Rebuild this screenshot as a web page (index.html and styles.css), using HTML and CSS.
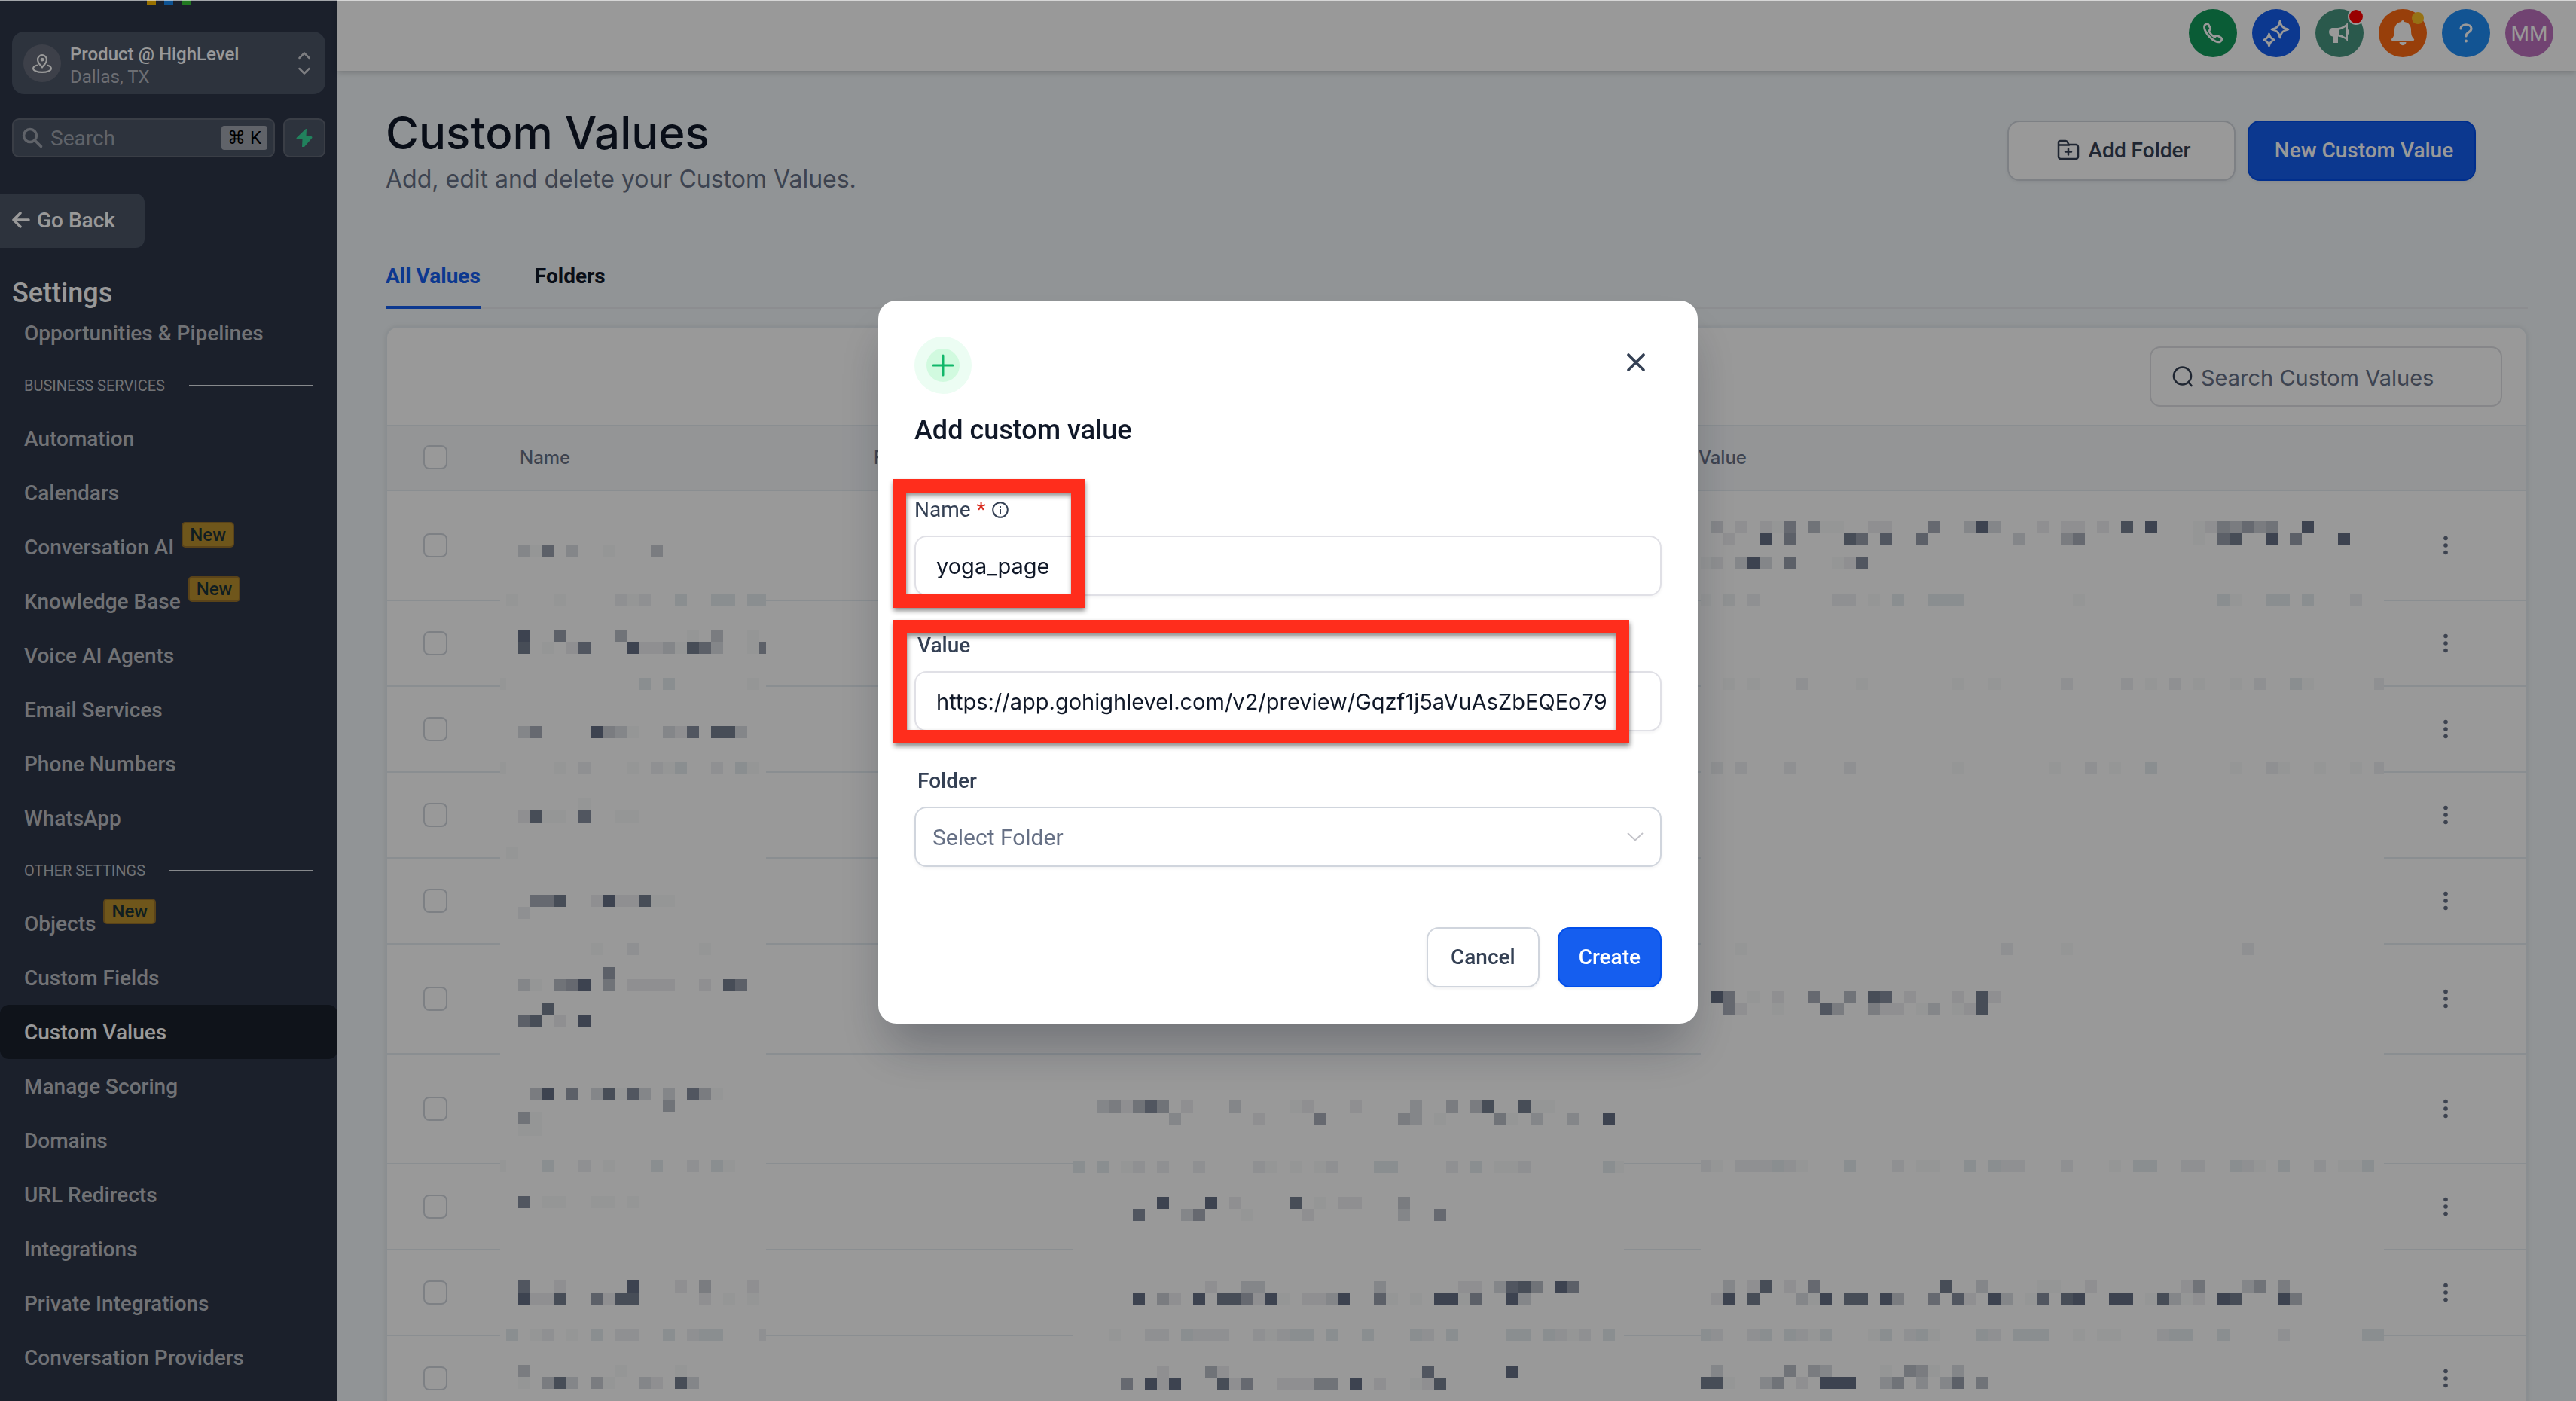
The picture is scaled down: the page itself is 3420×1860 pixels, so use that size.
FILE: index.html
```html
<!DOCTYPE html>
<html lang="en">
<head>
  <meta charset="UTF-8">
  <title>Custom Values</title>
  <link rel="stylesheet" href="styles.css">
</head>
<body>

  <aside class="sidebar">
    <div class="logo"><i class="logo-y"></i><i class="logo-b"></i><i class="logo-g"></i></div>

    <button class="location">
      <span class="location-icon">
        <svg width="26" height="26" viewBox="0 0 24 24" fill="none" stroke="currentColor" stroke-width="2" stroke-linecap="round" stroke-linejoin="round"><path d="M12 17c-1-2-5.5-5-5.5-9.500a5.500 5.500 0 0 1 11 0C17.500 12 13 15 12 17z"/><circle cx="12" cy="7.500" r="1.200"/><path d="M5.500 14.500C3 15 1 16.500 1 18.500 1 21 6 23 12 23s11-2 11-4.500c0-2-2-3.500-4.500-4"/></svg>
      </span>
      <span class="location-text"><b>Product @ HighLevel</b><span>Dallas, TX</span></span>
      <svg class="location-arrows" width="16" height="30" viewBox="0 0 16 30" fill="none" stroke="currentColor" stroke-width="2.500" stroke-linecap="round" stroke-linejoin="round"><path d="M1.500 8 8 1.500 14.500 8M1.500 22 8 28.500 14.500 22"/></svg>
    </button>

    <div class="side-search">
      <label class="side-search-box">
        <svg width="28" height="28" viewBox="0 0 28 28" fill="none" stroke="currentColor" stroke-width="3.500" stroke-linecap="round"><circle cx="11" cy="11" r="8.500"/><path d="m17.500 17.500 8 8"/></svg>
        <input type="text" placeholder="Search" aria-label="Search">
        <kbd>⌘ K</kbd>
      </label>
      <button class="bolt" aria-label="Quick actions">
        <svg width="22" height="24" viewBox="0 0 22 24" fill="currentColor"><path d="M13 0 1 11.500c-1 1-.5 2.500 1 2.500h6.500L8 24h3L21 12.500c1-1 .5-2.500-1-2.500h-6.500L14 0z"/></svg>
      </button>
    </div>

    <button class="go-back">
      <svg width="24" height="22" viewBox="0 0 24 22" fill="none" stroke="currentColor" stroke-width="3.500" stroke-linecap="round" stroke-linejoin="round"><path d="M22 11H2M11 2l-9 9 9 9"/></svg>
      Go Back
    </button>

    <h2 class="side-title">Settings</h2>

    <nav class="side-nav">
      <a href="#">Opportunities &amp; Pipelines</a>
      <div class="side-group">BUSINESS SERVICES</div>
      <a href="#">Automation</a>
      <a href="#">Calendars</a>
      <a href="#">Conversation AI <span class="new">New</span></a>
      <a href="#">Knowledge Base <span class="new">New</span></a>
      <a href="#">Voice AI Agents</a>
      <a href="#">Email Services</a>
      <a href="#">Phone Numbers</a>
      <a href="#">WhatsApp</a>
      <div class="side-group">OTHER SETTINGS</div>
      <a href="#">Objects <span class="new">New</span></a>
      <a href="#">Custom Fields</a>
      <a href="#" class="active">Custom Values</a>
      <a href="#">Manage Scoring</a>
      <a href="#">Domains</a>
      <a href="#">URL Redirects</a>
      <a href="#">Integrations</a>
      <a href="#">Private Integrations</a>
      <a href="#">Conversation Providers</a>
    </nav>
  </aside>

  <div class="page">
    <header class="topbar">
      <button class="round green" aria-label="Phone">
        <svg width="28" height="28" viewBox="0 0 28 28" fill="none" stroke="currentColor" stroke-width="2.800" stroke-linejoin="round"><path d="M3 3.500C4.500 1.500 7 1 8 2.500l2.500 4.700c.6 1.300-.2 2.500-1.800 3.800 1.500 3.500 4.300 6.500 7.800 8.300 1.400-1.500 2.700-2.400 4-1.700l4.500 2.700c1.500 1 .8 3.500-1.200 5C17 29.500-.5 11.500 3 3.500z"/></svg>
      </button>
      <button class="round blue" aria-label="AI">
        <svg width="38" height="38" viewBox="0 0 38 38" fill="none" stroke="currentColor" stroke-width="2.800" stroke-linejoin="round"><path d="M24 3c1.500 7 3.500 9 11 11-7.500 2-9.500 4-11 11-1.500-7-3.500-9-11-11 7.500-2 9.500-4 11-11zM9.500 20c1 4.500 2.500 6.500 7 8-4.500 1.500-6 3.500-7 8-1-4.500-2.500-6.500-7-8 4.500-1.500 6-3.500 7-8z"/></svg>
      </button>
      <button class="round teal" aria-label="Announcements">
        <svg width="28" height="28" viewBox="0 0 28 28"><path fill="currentColor" d="M25 0v9c2.500.5 2.500 6.500 0 7v9c-4-4-8-6-13-6.500V27H5v-8.500C-1.500 18-1.500 7 5 7h7c5-.5 9-3 13-7zm-3 6c-3 2-6 3.300-9 3.800v6c3 .5 6 1.800 9 3.700z"/></svg>
        <i class="dot red"></i>
      </button>
      <button class="round orange" aria-label="Notifications">
        <svg width="32" height="36" viewBox="0 0 32 36" fill="currentColor"><path d="M14 3a2 2 0 0 1 4 0c6 1 9 5 9 11 0 6 1 9 4 12 .5.500 0 2-1 2H2c-1 0-1.500-1.500-1-2 3-3 4-6 4-12 0-6 3-10 9-11zM11.500 30h9c0 5.500-9 5.500-9 0z"/></svg>
        <i class="dot yellow"></i>
      </button>
      <button class="round sky" aria-label="Help">
        <svg width="18" height="26" viewBox="0 0 18 26" fill="none" stroke="currentColor" stroke-width="3.200" stroke-linecap="round"><path d="M2 7c0-7 14-7 14 0 0 5-7 4.500-7 10"/><path d="M9 23.500v.1" stroke-width="4"/></svg>
      </button>
      <button class="round purple">MM</button>
    </header>

    <main class="content">
      <div class="head">
        <div>
          <h1>Custom Values</h1>
          <p>Add, edit and delete your Custom Values.</p>
        </div>
        <div class="head-actions">
          <button class="btn">
            <svg width="30" height="28" viewBox="0 0 30 28" fill="none" stroke="currentColor" stroke-width="2.500" stroke-linecap="round" stroke-linejoin="round"><path d="M2 8V4.500A2.500 2.500 0 0 1 4.500 2h7c1.500 0 2 .8 2.600 2l1.500 3H25a3 3 0 0 1 3 3v13a3 3 0 0 1-3 3H5a3 3 0 0 1-3-3zM2 7.500h14M15 12.500v8M11 16.500h8"/></svg>
            Add Folder
          </button>
          <button class="btn primary">New Custom Value</button>
        </div>
      </div>

      <nav class="tabs">
        <a href="#" class="on">All Values</a>
        <a href="#">Folders</a>
      </nav>

      <section class="card">
        <div class="card-bar">
          <label class="search">
            <svg width="28" height="28" viewBox="0 0 28 28" fill="none" stroke="currentColor" stroke-width="2.600" stroke-linecap="round"><circle cx="13.500" cy="13" r="11.500"/><path d="m21.500 21.500 4 4.500"/></svg>
            <input type="text" placeholder="Search Custom Values" aria-label="Search Custom Values">
          </label>
        </div>
        <table>
          <colgroup><col class="c-check"><col class="c-name"><col class="c-folder"><col class="c-key"><col><col class="c-more"></colgroup>
          <thead>
            <tr>
              <th><input type="checkbox" aria-label="Select all"></th>
              <th>Name</th><th>Folder</th><th>Key</th><th>Value</th><th></th>
            </tr>
          </thead>
          <tbody id="rows"></tbody>
        </table>
      </section>
    </main>
  </div>

  <div class="overlay">
    <form class="modal">
      <div class="modal-top">
        <span class="plus"><svg width="30" height="30" viewBox="0 0 30 30" fill="none" stroke="currentColor" stroke-width="3" stroke-linecap="round"><path d="M15 2v26M2 15h26"/></svg></span>
        <button type="button" class="close" aria-label="Close"><svg width="24" height="24" viewBox="0 0 24 24" fill="none" stroke="currentColor" stroke-width="3.600" stroke-linecap="round"><path d="m2 2 20 20M22 2 2 22"/></svg></button>
      </div>
      <h2>Add custom value</h2>

      <div class="field">
        <label for="name">Name <em>*</em>
          <svg width="22" height="22" viewBox="0 0 22 22" fill="none" stroke="currentColor" stroke-width="2"><circle cx="11" cy="11" r="9.800"/><path d="M11 10v6M11 6v2"/></svg>
        </label>
        <input type="text" id="name" value="yoga_page">
        <i class="mark mark-name"></i>
      </div>

      <div class="field medium">
        <label for="value">Value</label>
        <input type="text" id="value" value="https://app.gohighlevel.com/v2/preview/Gqzf1j5aVuAsZbEQEo79">
        <i class="mark mark-value"></i>
      </div>

      <div class="field medium">
        <label for="folder">Folder</label>
        <div class="select">
          <select id="folder"><option>Select Folder</option></select>
          <svg width="22" height="12" viewBox="0 0 22 12" fill="none" stroke="currentColor" stroke-width="1.800"><path d="m1 1 10 9.500L21 1"/></svg>
        </div>
      </div>

      <div class="modal-actions">
        <button type="button" class="btn">Cancel</button>
        <button type="button" class="btn primary">Create</button>
      </div>
    </form>
  </div>

  <script src="script.js"></script>
</body>
</html>
```
FILE: styles.css
```css
* { box-sizing: border-box; }
body { margin: 0; height: 100vh; display: flex; overflow: hidden; font-family: Roboto, "Liberation Sans", sans-serif; font-size: 28px; color: #101828; background: #f2f7fa; }
button, input, select { font: inherit; color: inherit; }
button { cursor: pointer; border: 0; background: none; padding: 0; }
a { color: inherit; text-decoration: none; }
svg { display: block; flex: none; }
h1, h2, p { margin: 0; font-weight: 500; }

/* sidebar */
.sidebar { width: 448px; flex: none; background: #2d3649; color: #fff; display: flex; flex-direction: column; align-items: flex-start; }
.logo { display: flex; gap: 11px; height: 42px; padding-left: 195px; }
.logo i { width: 12px; height: 6px; }
.logo-y { background: #ffbc00; }
.logo-b { background: #188bf6; }
.logo-g { background: #37ca37; }

.location { display: flex; align-items: center; gap: 12px; width: 416px; height: 83px; margin: 0 16px; padding: 0 20px 0 15px; border-radius: 16px; background: #4b5567; text-align: left; }
.location-icon { width: 50px; height: 50px; border-radius: 50%; background: #676c7a; display: grid; place-items: center; }
.location-text { flex: 1; padding-top: 6px; font-size: 24px; line-height: 30px; }
.location-text b { display: block; font-weight: 500; }
.location-text span { color: #b4b8c0; }
.location-arrows { color: #d0d3d8; }

.side-search { display: flex; gap: 11px; margin: 32px 16px 0; width: 416px; }
.side-search-box { flex: 1; min-width: 0; display: flex; align-items: center; gap: 10px; height: 52px; padding: 0 8px 0 11px; border: 2px solid #616876; border-radius: 9px; background: #4b5567; color: #a0a6b0; }
.side-search-box input { flex: 1; width: 0; min-width: 0; border: 0; padding: 0; background: none; outline: none; }
.side-search-box input::placeholder { color: #a0a6b0; opacity: 1; }
kbd { flex: none; font: inherit; font-size: 24px; line-height: 32px; padding: 0 8px; border-radius: 4px; background: #a0a6b0; color: #000; white-space: nowrap; }
.bolt { flex: none; width: 56px; height: 52px; display: grid; place-items: center; border: 2px solid #616876; border-radius: 9px; background: #4b5567; color: #38d79a; }

.go-back { display: flex; align-items: center; gap: 9px; width: 192px; height: 72px; margin-top: 48px; padding: 0 0 2px 16px; border-radius: 0 12px 12px 0; background: #4b5567; font-weight: 500; }
.side-title { margin: 38px 16px 0; font-size: 36px; line-height: 44px; }

.side-nav { width: 100%; margin-top: -5px; font-weight: 500; color: #bcbfc4; }
.side-nav a { display: flex; align-items: center; gap: 10px; height: 72px; padding-left: 32px; border-radius: 12px; white-space: nowrap; }
.side-nav .active { background: #1a202c; color: #fff; }
.side-group { display: flex; align-items: center; gap: 32px; height: 68px; padding: 0 32px; font-size: 20px; font-weight: 400; }
.side-group::after { content: ""; flex: 1; height: 2px; background: #e2e5ea; }
.new { align-self: flex-start; margin-top: 3px; height: 34px; padding: 0 9px; border: 2px solid #96702a; border-radius: 5px; background: #b98f2d; color: #1a3338; font-size: 24px; line-height: 30px; }

/* top bar */
.page { flex: 1; min-width: 0; }
.topbar { position: relative; display: flex; justify-content: flex-end; gap: 20px; height: 94px; padding: 12px 30px; background: #fff; box-shadow: 0 2px 8px rgba(0, 0, 0, .2); }
.round { position: relative; width: 64px; height: 64px; border-radius: 50%; color: #fff; display: grid; place-items: center; }
.green { background: #12995a; }
.blue { background: #155eef; }
.teal { background: #47957f; }
.orange { background: #fd6912; }
.sky { background: #1e8cf5; }
.purple { background: #bc71be; }
.dot { position: absolute; border-radius: 50%; }
.dot.red { right: -1px; top: -1px; width: 22px; height: 22px; background: #f00; border: 2px solid #fff; }
.dot.yellow { right: 4px; top: 4px; width: 16px; height: 16px; background: #fbbf24; }

/* content */
.content { padding: 48px 64px 0; }
.head { display: flex; justify-content: space-between; align-items: flex-start; padding-right: 69px; }
.head h1, .head p, th, .search, .field input { font-family: Inter, "Liberation Sans", sans-serif; }
.head h1 { font-size: 60px; line-height: 68px; }
.head p { margin-top: 8px; font-size: 32px; line-height: 40px; font-weight: 400; color: #667085; }
.head-actions { display: flex; gap: 16px; padding-top: 18px; }
.head-actions .btn { width: 303px; padding: 0 30px 2px 36px; }
.btn { display: flex; align-items: center; justify-content: center; gap: 12px; height: 80px; padding: 0 30px 2px; border: 2px solid #d0d5dd; border-radius: 16px; background: #fff; color: #344054; font-weight: 500; box-shadow: 0 2px 4px rgba(16, 24, 40, .06); white-space: nowrap; }
.btn.primary { background: #155eef; border-color: #004eeb; color: #fff; }

.tabs { display: flex; gap: 72px; margin-top: 88px; border-bottom: 2px solid #eaecf0; font-weight: 700; line-height: 42px; }
.tabs a { padding-bottom: 18px; margin-bottom: -2px; border-bottom: 4px solid transparent; }
.tabs .on { color: #155eef; border-color: #155eef; }

.card { margin-top: 23px; border: 2px solid #e6edf2; border-radius: 16px; background: #fff; overflow: hidden; box-shadow: 0 0 6px rgba(0, 0, 0, .08); }
.card-bar { display: flex; justify-content: flex-end; padding: 25px 32px 24px; border-bottom: 2px solid #e6edf2; }
.search { display: flex; align-items: center; gap: 10px; width: 468px; height: 80px; padding: 0 28px; border: 2px solid #dfe0e4; border-radius: 14px; color: #344054; font-size: 29px; }
.search input { flex: 1; min-width: 0; border: 0; padding: 2px 0 0; outline: none; background: none; }
.search input::placeholder { color: #667085; opacity: 1; }

table { width: 100%; border-collapse: separate; border-spacing: 0; table-layout: fixed; }
.c-check { width: 145px; }
.c-name { width: 470px; }
.c-folder { width: 295px; }
.c-key { width: 800px; }
.c-more { width: 184px; }
th { height: 86px; padding: 0 31px 2px; border-bottom: 2px solid #e6edf2; background: #f7f9fb; text-align: left; font-size: 24px; font-weight: 500; color: #667085; }
td { position: relative; height: 114px; padding: 0 31px; border-bottom: 2px solid #e6edf2; }
.tall td { height: 146px; }
th:first-child { padding: 0 0 2px 48px; }
td:first-child { padding: 0 0 0 48px; }
td:last-child { padding: 0 0 0 72px; }
input[type=checkbox] { appearance: none; display: block; width: 32px; height: 32px; margin: 0; border: 2px solid #d0d5dd; border-radius: 8px; background: #fff; }
.more { display: block; width: 10px; color: #667085; }

/* blurred-out cell contents, laid over the rows */
.mosaic { position: absolute; top: 8px; z-index: 1; background: #fff; }
.mosaic.name { left: 5px; }
.mosaic.key { left: 0; top: 16px; }
.mosaic.value { left: 34px; }

/* modal */
.overlay { position: fixed; inset: 0; z-index: 10; display: flex; justify-content: center; align-items: flex-start; padding-top: 399px; background: rgba(0, 0, 0, .4); }
.overlay::before { content: ""; position: absolute; top: 0; left: 0; right: 0; height: 1px; background: rgba(255, 255, 255, .6); }
.modal { width: 1088px; padding: 48px; border-radius: 24px; background: #fff; box-shadow: 0 40px 64px -12px rgba(16, 24, 40, .3); }
.modal-top { display: flex; justify-content: space-between; align-items: flex-start; }
.plus { width: 76px; height: 76px; display: grid; place-items: center; border: 16px solid #ecfdf3; border-radius: 50%; background: #d1fadf; color: #12b76a; }
.close { margin: 22px 22px 0 0; color: #344054; }
.modal h2 { margin: 26px 0 63px; font-size: 36px; line-height: 44px; }
.field { position: relative; margin-bottom: 45px; }
.field label { display: flex; align-items: center; gap: 8px; margin-bottom: 13px; line-height: 42px; color: #344054; }
.field.medium label { padding-left: 4px; font-weight: 500; }
.field em { color: #d92d20; font-style: normal; }
.field input, .field select { display: block; width: 100%; height: 80px; padding: 0 27px; border: 2px solid #e0e0e6; border-radius: 16px; background: #fff; outline: none; box-shadow: 0 2px 4px rgba(16, 24, 40, .05); }
.field input { font-size: 29px; }
.field select { appearance: none; padding: 0 22px; border-color: #d0d5dd; color: #667085; font-size: 30px; }
.select { position: relative; }
.select svg { position: absolute; right: 24px; top: 34px; color: #c2c2c8; }
.modal-actions { display: flex; justify-content: flex-end; gap: 24px; margin-top: 80px; }
.modal-actions .primary { padding: 0 26px 2px; }

/* red call-out frames */
.mark { position: absolute; border: 18px solid #ff2d1c; filter: drop-shadow(1px 4px 3px rgba(0, 0, 0, .45)); pointer-events: none; }
.mark-name { left: -29px; top: -20px; width: 255px; height: 171px; }
.mark-value { left: -28px; top: -13px; width: 977px; height: 164px; }
```
FILE: script.js
```js
// row, first column, cells: digits = text darkness, k/l/m = traces of the row borders
const TILE = 16;

const mosaics = {
  name: { x: 664, y: 660, w: 353, h: 1200, rows: [
    [724, 43, '2k6.2..k...3'],
    [788, 42, 'k...k....lkl..m..mm.mm'],
    [836, 43, '9..6....4.....k.3..k'],
    [852, 43, '8.k.17...9112k862..k6'],
    [900, 41, 'k...........m.m......k'],
    [964, 43, '25....932k..217.882'],
    [1012, 41, 'k....k.l...k.lkm..l.mk'],
    [1060, 48, 'k'],
    [1076, 43, '18kk.7..kk'],
    [1124, 42, 'k'],
    [1188, 44, '558..19118kk'],
    [1204, 43, 'l'],
    [1252, 49, 'k..l.....k'],
    [1284, 50, '6'],
    [1300, 43, '2k.459.4.1111..1.86'],
    [1332, 45, '8'],
    [1348, 43, '68.1.9'],
    [1444, 44, '39.6.28k72.2.73k'],
    [1460, 55, '4'],
    [1476, 43, '4k'],
    [1492, 43, 'kk'],
    [1540, 41, 'k...m..l.k...m..l.mk'],
    [1588, 43, '7.kk..kk.k'],
    [1700, 43, '7..1.....9...1.3...1'],
    [1716, 43, '9118..6188.....1.k.k'],
    [1764, 42, 'm.kl.k.m.ll..m.lmm...l'],
    [1812, 43, '3.......k....k'],
    [1828, 43, 'k.382.3k..21.82']
  ] },
  key: { x: 1424, y: 1415, w: 732, h: 445, rows: [
    [1460, 91, '231474.1...2....k1...1....2..3.38..8kk'],
    [1476, 97, '2......1....5......32.k....4k.2..2..9'],
    [1540, 89, 'm.m.kl.l..l....lk.k.kl...mm....l.m.kkl......mk'],
    [1588, 96, '9...9.1....8.k.11...3'],
    [1604, 94, '7...25...k....1.......2..5'],
    [1700, 100, '1..22.........2......11.2784.96'],
    [1716, 94, '9.31.9.88519k.1129..6k.k.99k6..92'],
    [1764, 92, 'k..ll.mlll..lklmm.m..m...ml.m....mm.mlkl.m'],
    [1812, 96, '1...41................7......9'],
    [1828, 93, '5.919...815..11144.9.1..k18']
  ] },
  value: { x: 2258, y: 660, w: 907, h: 1200, rows: [
    [692, 142, '2.1.1k5.4kk..11...5..292...1.11.1.8.9...k143534..9'],
    [708, 143, '1..9.6....86.7..6.......2...35.........k.68..9.6...9'],
    [740, 141, 'k1.292.6...k17'],
    [788, 141, 'k.l.l......ll.k.m..mmm.........k...........mk..mm.m...l'],
    [900, 143, 'k.k...l....k.......k..k.....l....l.k.l.k..k.l..mk.....l'],
    [1012, 142, 'l.l...l....l........k.......k..l.k..m......k..lk..k..k.l'],
    [1252, 144, 'k.....................l....k..............l'],
    [1316, 142, '95.k.1..5..4.87.1...1.81'],
    [1332, 143, '51..k...73..311.k2.k18'],
    [1540, 141, 'lk.lllmlk...m...l.kk..m.mll...l...k.mm..ll..mlk.m..l.kkm'],
    [1700, 143, '2.18.1.5..........8..2....kk..1.......14...24.3'],
    [1716, 142, '19.8...2k9.88.93..5.71.92.k7.89..99.k82k1.98...94'],
    [1764, 141, 'ml..lm.mlkm...km.lmk...ml.mmm..k.kk...lmm..m....l......mm'],
    [1812, 142, '2.....4.32....k.43k.2'],
    [1828, 141, '88k..24.1.999..24.2.26.4']
  ] }
};

const traces = { k: '#f8fafa', l: '#eff1f3', m: '#e6edf1' };

function mosaic(name) {
  const m = mosaics[name];
  let rects = '';
  for (const [y, col, cells] of m.rows) {
    [...cells].forEach((c, i) => {
      if (c === '.') return;
      const fill = traces[c] ? `fill="${traces[c]}"` : `fill="#667085" fill-opacity="${c / 9}"`;
      rects += `<rect x="${(col + i) * TILE}" y="${y}" width="${TILE}" height="${TILE}" ${fill}/>`;
    });
  }
  return `<svg class="mosaic ${name}" width="${m.w}" height="${m.h}" viewBox="${m.x} ${m.y} ${m.w} ${m.h}" shape-rendering="crispEdges">${rects}</svg>`;
}

const dots = '<svg width="10" height="26" viewBox="0 0 10 26" fill="currentColor"><circle cx="5" cy="3.500" r="2.800"/><circle cx="5" cy="13" r="2.800"/><circle cx="5" cy="22.500" r="2.800"/></svg>';
const tall = [0, 5, 6];

let html = '';
for (let i = 0; i < 10; i++) {
  html += `
    <tr class="${tall.includes(i) ? 'tall' : ''}">
      <td><input type="checkbox" aria-label="Select row"></td>
      <td>${i === 0 ? mosaic('name') : ''}</td>
      <td></td>
      <td>${i === 6 ? mosaic('key') : ''}</td>
      <td>${i === 0 ? mosaic('value') : ''}</td>
      <td><button class="more" aria-label="More">${dots}</button></td>
    </tr>`;
}
document.getElementById('rows').innerHTML = html;
```
